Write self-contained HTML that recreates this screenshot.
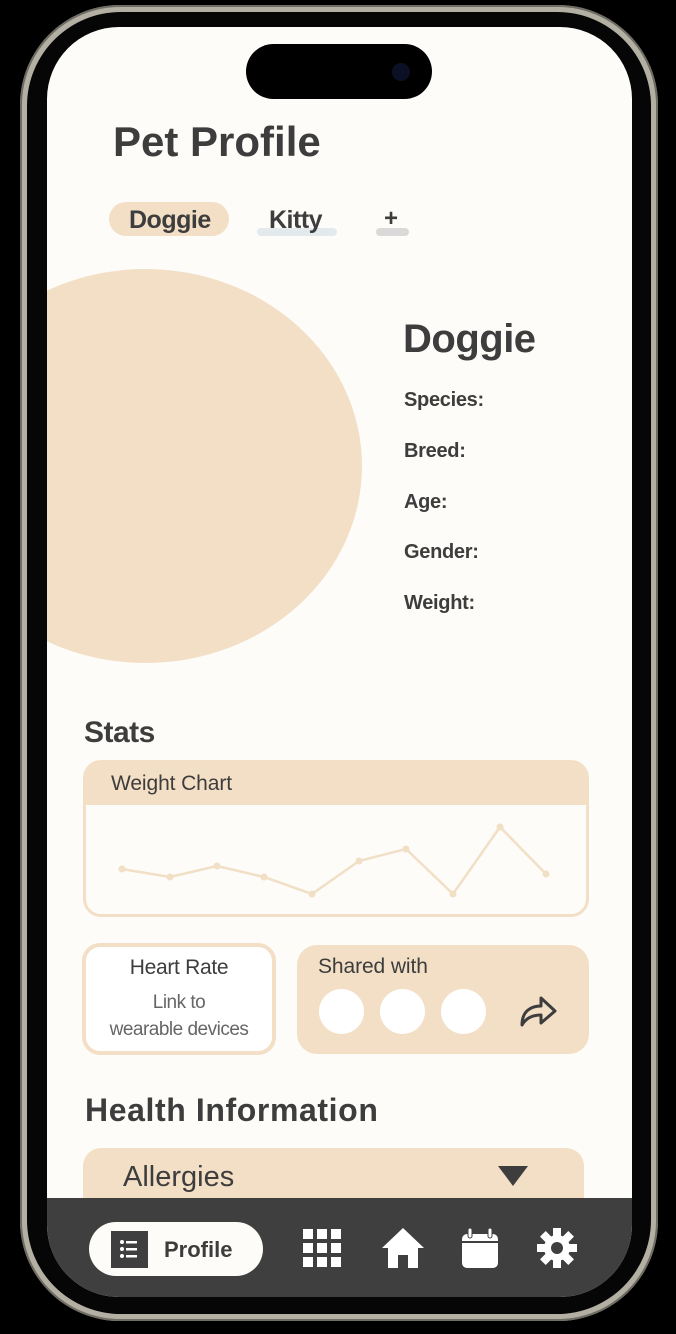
<!DOCTYPE html>
<html><head><meta charset="utf-8"><style>
*{margin:0;padding:0;box-sizing:border-box}
body{width:676px;height:1334px;background:#000;position:relative;overflow:hidden;font-family:"Liberation Sans",sans-serif;color:#3d3d3d}
.frame{position:absolute;left:20px;top:5px;width:638px;height:1316px;border-radius:100px;background:#b3b0a3;box-shadow:inset 0 0 0 2px #6e6c63}
.bez{position:absolute;left:27px;top:12px;width:624px;height:1302px;border-radius:94px;background:#060606}
.screen{position:absolute;left:47px;top:27px;width:585px;height:1270px;border-radius:72px;background:#fdfcf8;overflow:hidden}
.a{position:absolute}
.b{font-weight:bold;letter-spacing:-0.5px}
.island{left:199px;top:17px;width:186px;height:55px;border-radius:28px;background:#000}
.pill{background:#f3dfc6;border-radius:16px}
.lbl{font-size:20px;font-weight:bold;letter-spacing:-0.3px}
.circ{width:46px;height:46px;border-radius:50%;background:#fff}
.nav{left:0;top:1171px;width:585px;height:99px;background:#3f3f3f}
</style></head><body>
<div class="frame"></div>
<div class="bez"></div>
<div class="screen">
 <div class="a island"><div class="a" style="left:146px;top:19px;width:18px;height:18px;border-radius:50%;background:#0c1024"></div></div>
 <div class="a b" style="left:66px;top:91px;font-size:42px;letter-spacing:0">Pet Profile</div>
 <div class="a pill" style="left:62px;top:175px;width:120px;height:34px;border-radius:17px"></div>
 <div class="a b" style="left:82px;top:179px;font-size:25px">Doggie</div>
 <div class="a" style="left:210px;top:201px;width:80px;height:8px;border-radius:4px;background:#e3eaee"></div>
 <div class="a b" style="left:222px;top:179px;font-size:25px">Kitty</div>
 <div class="a" style="left:329px;top:201px;width:33px;height:8px;border-radius:4px;background:#d9d9d9"></div>
 <div class="a b" style="left:337px;top:178px;font-size:24px">+</div>
 <div class="a" style="left:-118px;top:242px;width:433px;height:394px;border-radius:50%;background:#f3dfc6"></div>
 <div class="a b" style="left:356px;top:290px;font-size:40px">Doggie</div>
 <div class="a lbl" style="left:357px;top:362px">Species:</div>
 <div class="a lbl" style="left:357px;top:413px">Breed:</div>
 <div class="a lbl" style="left:357px;top:464px">Age:</div>
 <div class="a lbl" style="left:357px;top:514px">Gender:</div>
 <div class="a lbl" style="left:357px;top:565px">Weight:</div>
 <div class="a b" style="left:37px;top:689px;font-size:30px">Stats</div>
 <div class="a" style="left:36px;top:733px;width:506px;height:157px;border:3px solid #f3dfc6;border-radius:18px;overflow:hidden;background:#fdfcf8">
  <div style="height:42px;background:#f3dfc6;padding:9px 0 0 25px;font-size:21px;letter-spacing:-0.1px">Weight Chart</div>
 </div>
 <svg class="a" style="left:0;top:0" width="585" height="1000"><polyline fill="none" stroke="#f1dfc6" stroke-width="2.5" points="75,842 123,850 170,839 217,850 265,867 312,834 359,822 406,867 453,800 499,847"/>
 <g fill="#f1dfc6"><circle cx="75" cy="842" r="3.5"/><circle cx="123" cy="850" r="3.5"/><circle cx="170" cy="839" r="3.5"/><circle cx="217" cy="850" r="3.5"/><circle cx="265" cy="867" r="3.5"/><circle cx="312" cy="834" r="3.5"/><circle cx="359" cy="822" r="3.5"/><circle cx="406" cy="867" r="3.5"/><circle cx="453" cy="800" r="3.5"/><circle cx="499" cy="847" r="3.5"/></g></svg>
 <div class="a" style="left:35px;top:916px;width:194px;height:112px;border:4px solid #f3dfc6;border-radius:18px;background:#fff;text-align:center">
  <div style="font-size:21px;margin-top:9px;letter-spacing:-0.3px">Heart Rate</div>
  <div style="font-size:19px;color:#666;line-height:27px;margin-top:9px;letter-spacing:-0.5px">Link to<br>wearable devices</div>
 </div>
 <div class="a pill" style="left:250px;top:918px;width:292px;height:109px;border-radius:20px">
  <div class="a" style="left:21px;top:10px;font-size:21px;letter-spacing:-0.1px">Shared with</div>
  <div class="a circ" style="left:22px;top:44px;width:45px;height:45px"></div>
  <div class="a circ" style="left:83px;top:44px;width:45px;height:45px"></div>
  <div class="a circ" style="left:144px;top:44px;width:45px;height:45px"></div>
  <svg class="a" style="left:222px;top:48px" width="40" height="36" viewBox="0 0 40 36"><path d="M3 32 C3 18 12 13 22 13 V5 L36 18 L22 30 V22 C13 22 7 25 3 32 Z" fill="none" stroke="#3d3d3d" stroke-width="3" stroke-linejoin="round"/></svg>
 </div>
 <div class="a b" style="left:38px;top:1065px;font-size:32px;letter-spacing:0.6px">Health Information</div>
 <div class="a pill" style="left:36px;top:1121px;width:501px;height:70px;border-radius:18px">
  <div class="a" style="left:40px;top:13px;font-size:29px;letter-spacing:0">Allergies</div>
  <svg class="a" style="left:415px;top:18px" width="32" height="22"><polygon points="0,0 30,0 15,20" fill="#3d3d3d"/></svg>
 </div>
 <div class="a nav">
  <div class="a" style="left:42px;top:24px;width:174px;height:54px;border-radius:27px;background:#fdfcf8">
   <div class="a" style="left:22px;top:9px;width:37px;height:37px;background:#3f3f3f"></div>
   <svg class="a" style="left:30px;top:17px" width="20" height="20" fill="#fff"><circle cx="3" cy="3" r="2"/><circle cx="3" cy="10" r="2"/><circle cx="3" cy="17" r="2"/><rect x="7" y="2" width="11" height="2.5"/><rect x="7" y="9" width="11" height="2.5"/><rect x="7" y="16" width="11" height="2.5"/></svg>
   <div class="a b" style="left:75px;top:15px;font-size:22px;letter-spacing:0">Profile</div>
  </div>
  <svg class="a" style="left:256px;top:31px" width="38" height="38" fill="#fff"><rect x="0" y="0" width="10" height="10"/><rect x="14" y="0" width="10" height="10"/><rect x="28" y="0" width="10" height="10"/><rect x="0" y="14" width="10" height="10"/><rect x="14" y="14" width="10" height="10"/><rect x="28" y="14" width="10" height="10"/><rect x="0" y="28" width="10" height="10"/><rect x="14" y="28" width="10" height="10"/><rect x="28" y="28" width="10" height="10"/></svg>
  <svg class="a" style="left:335px;top:30px" width="42" height="40" fill="#fff"><path d="M21 0 L42 20 H36 V40 H26 V27 H16 V40 H6 V20 H0 Z"/></svg>
  <svg class="a" style="left:415px;top:30px" width="36" height="40" fill="#fff"><rect x="0" y="6" width="36" height="34" rx="5"/><rect x="6" y="0" width="4" height="10" rx="2" stroke="#3f3f3f" stroke-width="1"/><rect x="26" y="0" width="4" height="10" rx="2" stroke="#3f3f3f" stroke-width="1"/><rect x="0" y="13" width="36" height="2" fill="#3f3f3f"/></svg>
  <svg class="a" style="left:490px;top:30px" width="40" height="40" viewBox="-20 -20 40 40"><g fill="#fff"><circle r="13"/><g id="t"><rect x="-4" y="-20" width="8" height="10"/></g><use href="#t" transform="rotate(45)"/><use href="#t" transform="rotate(90)"/><use href="#t" transform="rotate(135)"/><use href="#t" transform="rotate(180)"/><use href="#t" transform="rotate(225)"/><use href="#t" transform="rotate(270)"/><use href="#t" transform="rotate(315)"/></g><circle r="6" fill="#3f3f3f"/></svg>
 </div>
</div>
</body></html>
